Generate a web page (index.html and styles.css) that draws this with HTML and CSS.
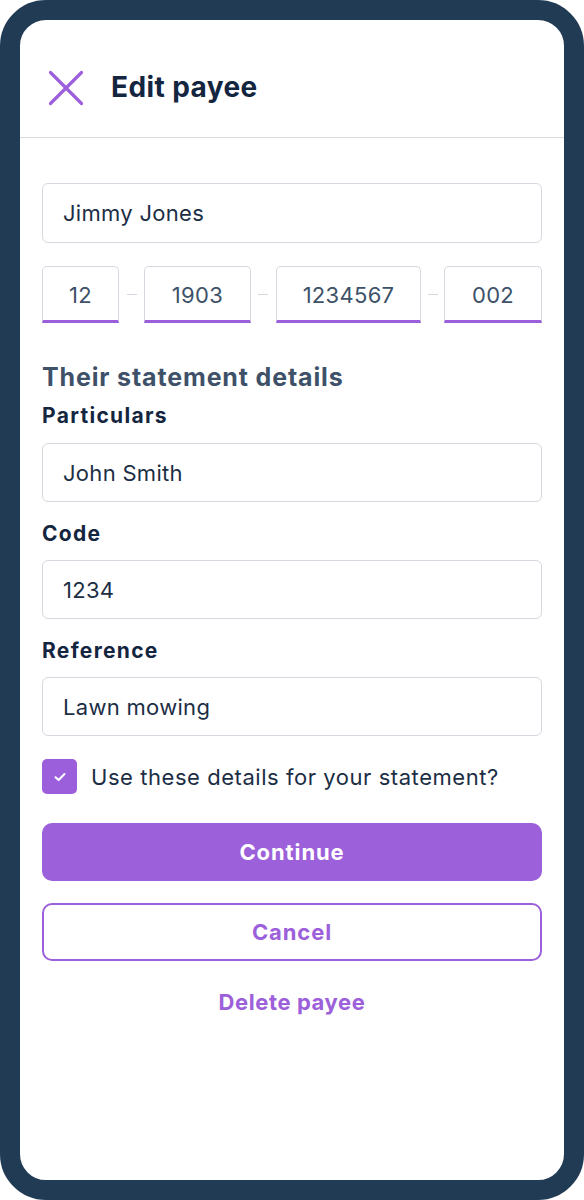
FILE: index.html
```html
<!DOCTYPE html>
<html lang="en">
<head>
<meta charset="utf-8">
<title>Edit payee</title>
<link rel="stylesheet" href="styles.css">
</head>
<body>
<div class="phone">
  <header class="header">
    <svg class="close" width="36" height="36" viewBox="0 0 36 36" aria-hidden="true">
      <path d="M2.5 2.5 L33.5 33.5 M33.5 2.5 L2.5 33.5" stroke="#9c5fdc" stroke-width="3.2" stroke-linecap="round" fill="none"/>
    </svg>
    <h1 class="title">Edit payee</h1>
  </header>
  <main class="content">
    <div class="input name-input">Jimmy Jones</div>
    <div class="account">
      <div class="acc acc-bank">12</div>
      <span class="dash dash-1"></span>
      <div class="acc acc-branch">1903</div>
      <span class="dash dash-2"></span>
      <div class="acc acc-num">1234567</div>
      <span class="dash dash-3"></span>
      <div class="acc acc-suffix">002</div>
    </div>
    <h2 class="section">Their statement details</h2>
    <label class="label">Particulars</label>
    <div class="input">John Smith</div>
    <label class="label">Code</label>
    <div class="input">1234</div>
    <label class="label">Reference</label>
    <div class="input">Lawn mowing</div>
    <div class="check-row">
      <span class="checkbox">
        <svg width="14" height="14" viewBox="0 0 14 14" aria-hidden="true">
          <path d="M2.5 7.2 L5.6 10 L11.5 4" stroke="#ffffff" stroke-width="2" stroke-linecap="round" stroke-linejoin="round" fill="none"/>
        </svg>
      </span>
      <span class="check-text">Use these details for your statement?</span>
    </div>
    <button class="btn btn-primary">Continue</button>
    <button class="btn btn-outline">Cancel</button>
    <a class="link-delete">Delete payee</a>
  </main>
</div>
</body>
</html>
```
FILE: styles.css
```css
* { box-sizing: border-box; }
html, body { margin: 0; padding: 0; background: #ffffff; }
body { font-family: Inter, "Noto Sans", sans-serif; color: #1b2d44; }

.phone {
  width: 584px;
  height: 1200px;
  border: 20px solid #223b54;
  border-radius: 46px;
  background: #ffffff;
  overflow: hidden;
}

.header {
  height: 118px;
  display: flex;
  align-items: center;
  gap: 27px;
  padding: 17px 0 0 28px;
  border-bottom: 1px solid #d6dade;
}
.close { flex: none; margin-top: 2px; }
.title {
  margin: 0;
  font-size: 28px;
  font-weight: 700;
  color: #14263f;
  letter-spacing: 0.4px;
}

.content {
  padding: 45px 22px 0;
  display: flex;
  flex-direction: column;
}

.input {
  height: 59px;
  border: 1.5px solid #d5d9df;
  border-radius: 6px;
  padding: 0 20px;
  display: flex;
  align-items: center;
  font-size: 22px;
  letter-spacing: 0.3px;
  color: #1c2e45;
}
.name-input { height: 60px; }

.account {
  margin-top: 23px;
  display: flex;
  align-items: center;
}
.acc {
  height: 57px;
  border: 1.5px solid #d5d9df;
  border-bottom: 3px solid #9c5fdc;
  border-radius: 5px 5px 0 0;
  display: flex;
  align-items: center;
  justify-content: center;
  font-size: 22px;
  letter-spacing: 0.3px;
  color: #3d5169;
  padding-top: 2px;
}
.acc-bank { width: 77px; }
.acc-branch { width: 107px; }
.acc-num { width: 145px; }
.acc-suffix { width: 98px; }
.dash {
  flex: none;
  width: 10px;
  height: 1.5px;
  background: #d5d9df;
}
.dash-1 { margin: 0 7px 0 8px; }
.dash-2 { margin: 0 8px 0 7px; }
.dash-3 { margin: 0 6px 0 7px; }

.section {
  margin: 39px 0 0;
  font-size: 25px;
  font-weight: 700;
  color: #3e5169;
  line-height: 30px;
  letter-spacing: 0.85px;
}
.label {
  margin: 11px 0 14px;
  font-size: 21px;
  font-weight: 700;
  color: #14263f;
  line-height: 26px;
  letter-spacing: 1.3px;
}
.input + .label { margin: 19px 0 13px; }

.check-row {
  margin-top: 23px;
  display: flex;
  align-items: center;
  gap: 14px;
}
.checkbox {
  width: 35px;
  height: 35px;
  border-radius: 5px;
  background: #9c5fdc;
  display: flex;
  align-items: center;
  justify-content: center;
}
.check-text {
  font-size: 22px;
  letter-spacing: 0.55px;
  color: #1c2e45;
}

.btn {
  width: 100%;
  height: 58px;
  border-radius: 10px;
  font-family: inherit;
  font-size: 22px;
  font-weight: 700;
  letter-spacing: 0.9px;
  cursor: pointer;
}
.btn-primary {
  margin-top: 29px;
  background: #9c60da;
  color: #ffffff;
  border: none;
}
.btn-outline {
  margin-top: 22px;
  background: #ffffff;
  color: #9c60da;
  border: 2.5px solid #9c60da;
}
.link-delete {
  margin-top: 28px;
  text-align: center;
  font-size: 22px;
  font-weight: 700;
  letter-spacing: 0.6px;
  color: #9c60da;
}
```
